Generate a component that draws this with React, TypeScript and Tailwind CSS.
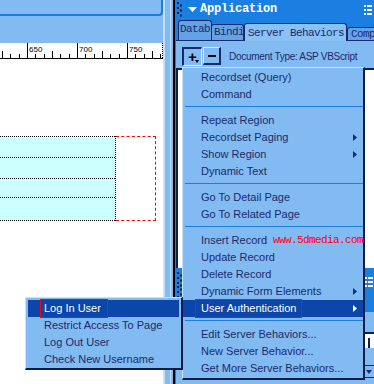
import React from "react";

type Item = { label?: string; arrow?: boolean; hl?: boolean; extra?: string; sep?: boolean };

const items: Item[] = [
  { label: "Recordset (Query)" },
  { label: "Command" },
  { sep: true },
  { label: "Repeat Region" },
  { label: "Recordset Paging", arrow: true },
  { label: "Show Region", arrow: true },
  { label: "Dynamic Text" },
  { sep: true },
  { label: "Go To Detail Page" },
  { label: "Go To Related Page" },
  { sep: true },
  { label: "Insert Record", extra: "www.5dmedia.com" },
  { label: "Update Record" },
  { label: "Delete Record" },
  { label: "Dynamic Form Elements", arrow: true },
  { label: "User Authentication", arrow: true, hl: true },
  { sep: true },
  { label: "Edit Server Behaviors..." },
  { label: "New Server Behavior..." },
  { label: "Get More Server Behaviors..." },
];

const subItems = [
  { label: "Log In User", hl: true },
  { label: "Restrict Access To Page" },
  { label: "Log Out User" },
  { label: "Check New Username" },
];

function Ruler() {
  const ticks: React.ReactNode[] = [];
  for (let i = -3; i < 18; i++) {
    const x = Math.round(27 + (i * 50) / 6) + 0.5;
    if (x > 162) break;
    const m = ((i % 6) + 6) % 6;
    const y1 = m === 0 ? 0 : m === 3 ? 8 : 11;
    ticks.push(<line key={i} x1={x} x2={x} y1={y1} y2={16} stroke="#000" strokeWidth={1} />);
  }
  return (
    <svg width="163" height="17" className="block bg-white">
      {ticks}
      <line x1={0} x2={163} y1={15.5} y2={15.5} stroke="#000" strokeWidth={1} />
      <line x1={162.5} x2={162.5} y1={0} y2={15} stroke="#000" strokeWidth={1} strokeDasharray="1 1" />
      <text x={29} y={9} fontSize={8} fontFamily="Liberation Sans, Arial, sans-serif" fill="#000">650</text>
      <text x={79} y={9} fontSize={8} fontFamily="Liberation Sans, Arial, sans-serif" fill="#000">700</text>
      <text x={129} y={9} fontSize={8} fontFamily="Liberation Sans, Arial, sans-serif" fill="#000">750</text>
    </svg>
  );
}

function Gripper() {
  const dots: React.ReactNode[] = [];
  for (let k = 0; k < 6; k++) {
    dots.push(<rect key={k} x={k % 2 === 0 ? 0 : 3} y={k * 2.5} width={2} height={2} fill="#0c1a3c" />);
  }
  return (
    <svg width="6" height="15" className="block">
      {dots}
    </svg>
  );
}

function ListIcon() {
  return (
    <svg width="8" height="10" className="block">
      {[0, 4, 8].map((y) => (
        <g key={y}>
          <rect x={0} y={y} width={2} height={2} fill="#fff" />
          <rect x={3} y={y} width={5} height={2} fill="#fff" />
        </g>
      ))}
    </svg>
  );
}

function Arrow({ white }: { white?: boolean }) {
  return (
    <svg width="4" height="7" className="block">
      <polygon points="0,0 4,3.5 0,7" fill={white ? "#fff" : "#1b2a6b"} />
    </svg>
  );
}

export default function App() {
  return (
    <div className="relative w-[374px] h-[384px] overflow-hidden flex bg-[#82baf2] font-['Liberation_Sans',Arial,sans-serif] text-[#1b2a6b]">
      {/* Document window */}
      <div className="w-[163px] shrink-0 flex flex-col">
        <div className="h-[43px]">
          <div className="h-[16px] border-b-2 border-r-2 border-[#1c7ae0] rounded-br-[4px]" />
        </div>
        <Ruler />
        <div className="flex-1 bg-white pt-[76px]">
          <div className="flex">
            <div className="w-[116px] bg-[#ccffff] border-r border-dotted border-black flex flex-col">
              <div className="h-[21px] border-t border-dotted border-black" />
              <div className="h-[21px] border-t border-dotted border-black" />
              <div className="h-[19px] border-t border-dotted border-black" />
              <div className="h-[24px] border-t border-b border-dotted border-black" />
            </div>
            <div className="w-[40px] h-[85px] border-t border-r border-b border-dashed border-[#ff0000]" />
          </div>
        </div>
      </div>

      {/* Splitter */}
      <div className="w-[10px] shrink-0 flex">
        <div className="w-[2px] bg-[#c4e0fc]" />
        <div className="w-[5px]" />
        <div className="w-[1px] bg-[#c4e0fc]" />
        <div className="w-[2px]" />
      </div>
      <div className="w-[2px] shrink-0 bg-black" />
      <div className="w-[1px] shrink-0 bg-[#1b7fe2]" />

      {/* Panel group */}
      <div className="flex-1 flex flex-col min-w-0">
        {/* Application panel header */}
        <div className="h-[40px] bg-[#1b7fe2] flex flex-col shrink-0">
          <div className="h-[19px] flex items-center relative">
            <div className="ml-[1px]">
              <Gripper />
            </div>
            <svg width="9" height="5" className="block ml-[5px]">
              <polygon points="0,0 9,0 4.5,5" fill="#fff" />
            </svg>
            <span className="ml-[3px] text-white font-bold text-[12px] tracking-[-0.2px] font-['Liberation_Mono',monospace] leading-[19px]">
              Application
            </span>
            <div className="absolute right-[2px] top-[5px]">
              <ListIcon />
            </div>
          </div>
          <div className="h-[21px] flex items-end pl-[2px] font-['Liberation_Mono',monospace] text-[11px] tracking-[-0.6px] leading-[14px] whitespace-nowrap">
            <div className="w-[34px] h-[20px] shrink-0 bg-[#64a2e8] border border-b-0 border-[#1b2a6b] rounded-t-[3px] pl-[1px] pt-[1px]">
              Datab
            </div>
            <div className="w-[33px] h-[16px] shrink-0 -ml-[1px] bg-[#64a2e8] border border-b-0 border-[#1b2a6b] rounded-t-[3px] pl-[2px]">
              Bindi
            </div>
            <div className="w-[103px] h-[18px] shrink-0 -mb-[1px] relative z-10 bg-[#8ac0f4] border border-b-0 border-[#1b2a6b] rounded-t-[3px] pl-[3px] pt-[2px]">
              Server Behaviors
            </div>
            <div className="w-[40px] h-[13px] shrink-0 bg-[#64a2e8] border border-b-0 border-[#1b2a6b] rounded-t-[3px] pl-[3px] leading-[12px]">
              Comp
            </div>
          </div>
        </div>

        {/* toolbar */}
        <div className="h-[28px] shrink-0 border-t border-[#1b2a6b] flex items-start pt-[6px] pl-[6px]">
          <div className="relative w-[20px] h-[19px] border-t-2 border-l-2 border-b border-r border-t-[#1b2a6b] border-l-[#1b2a6b] border-b-[#d4eafe] border-r-[#d4eafe] flex items-center justify-center">
            <span className="text-black font-bold text-[15px] leading-none -mt-[1px]">+</span>
            <svg width="4" height="3" className="absolute right-[2px] bottom-[2px]">
              <polygon points="0,0 4,0 2,3" fill="#000" />
            </svg>
          </div>
          <div className="ml-[1px] w-[18px] h-[18px] border-t border-l border-b-2 border-r-2 border-t-[#d4eafe] border-l-[#d4eafe] border-b-[#1b2a6b] border-r-[#1b2a6b] flex items-center justify-center">
            <div className="w-[8px] h-[2px] bg-black" />
          </div>
          <span className="ml-[8px] text-[10px] tracking-[-0.3px] leading-[19px] whitespace-nowrap">
            Document Type: ASP VBScript
          </span>
        </div>

        {/* list area */}
        <div className="h-[200px] shrink-0 bg-white border-t-2 border-l-2 border-[#10204a]" />

        {/* second panel */}
        <div className="h-[44px] shrink-0 bg-[#1b7fe2] relative">
          <div className="absolute left-[1px] top-[4px]">
            <Gripper />
          </div>
          <div className="absolute left-[1px] top-[18px]">
            <Gripper />
          </div>
          <div className="absolute right-[1px] top-[9px]">
            <ListIcon />
          </div>
        </div>
        <div className="flex-1 relative">
          <div className="absolute left-[14px] right-0 top-[20px] h-[16px] bg-white border-t-2 border-[#10204a]" />
          <div className="absolute right-[4px] top-[26px] w-[2px] h-[10px] bg-[#10204a]" />
          <div className="absolute left-[14px] right-[-3px] top-[53px] h-[13px] border border-[#1b2a6b] bg-[#82baf2]">
            <svg width="6" height="4" className="absolute right-[4px] top-[4px]">
              <polygon points="0,0 6,0 3,4" fill="#1b2a6b" />
            </svg>
          </div>
        </div>
      </div>

      {/* Context menu */}
      <div className="absolute left-[182px] top-[67px] w-[183px] h-[313px] bg-[#82baf2] border-t border-l border-t-[#c8e2fc] border-l-[#c8e2fc] border-b-2 border-r-2 border-b-[#0e1c4a] border-r-[#0e1c4a] pt-[1px] z-20">
        {items.map((it, i) =>
          it.sep ? (
            <div key={i} className="h-[9px] pt-[3px] pl-[2px]">
              <div className="h-[1px] bg-[#1b7fe2]" />
            </div>
          ) : (
            <div
              key={i}
              className={`relative h-[17px] flex items-center justify-between pl-[18px] pr-[6px] text-[11px] leading-[17px] whitespace-nowrap ${
                it.hl ? "bg-[#0c46aa] text-white" : ""
              }`}
            >
              <span>{it.label}</span>
              {it.arrow ? <Arrow white={it.hl} /> : null}
              {it.extra ? (
                <span className="absolute left-[90px] top-0 text-[#ff0000] font-['Liberation_Mono',monospace] text-[11px] tracking-[-0.6px] leading-[17px]">
                  {it.extra}
                </span>
              ) : null}
            </div>
          )
        )}
      </div>

      {/* Submenu */}
      <div className="absolute left-[25px] top-[297px] w-[158px] h-[73px] bg-[#82baf2] border-t border-l border-t-[#c8e2fc] border-l-[#c8e2fc] border-b-2 border-r-2 border-b-[#0e1c4a] border-r-[#0e1c4a] pt-[2px] px-[2px] z-20">
        {subItems.map((s, i) => (
          <div
            key={i}
            className={`h-[17px] pl-[16px] text-[11px] leading-[17px] whitespace-nowrap ${
              s.hl ? "bg-[#0c46aa] text-white" : ""
            }`}
          >
            {s.label}
          </div>
        ))}
      </div>

      {/* red annotation boxes */}
      <div className="absolute left-[195px] top-[299px] w-[107px] h-[19px] border border-[#ff0000] z-30" />
      <div className="absolute left-[40px] top-[299px] w-[68px] h-[19px] border border-[#ff0000] z-30" />
    </div>
  );
}
